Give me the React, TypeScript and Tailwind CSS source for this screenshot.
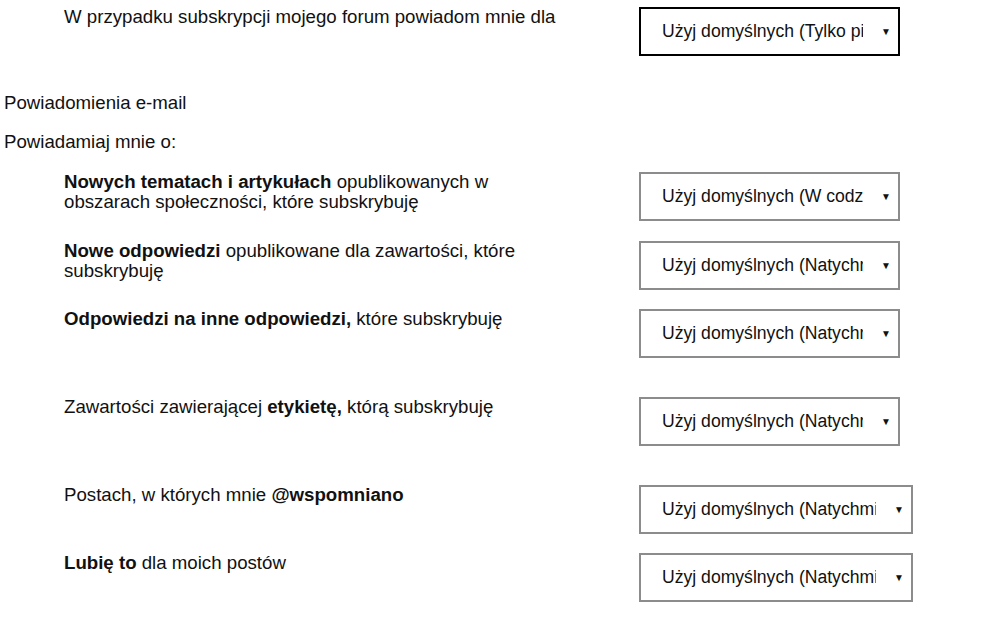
import type { ReactNode } from 'react';

function Dropdown({ value, wide, active }: { value: string; wide?: boolean; active?: boolean }) {
  return (
    <div
      className={`flex h-[49px] shrink-0 items-center border-2 bg-white pl-[21px] pr-[8px] ${
        wide ? 'w-[274px]' : 'w-[261px]'
      } ${active ? 'border-black' : 'border-[#8c8c8c]'}`}
    >
      <span className="mr-[19px] flex-1 overflow-hidden whitespace-nowrap text-[17.6px] text-[#111]">{value}</span>
      <span className="flex w-[8px] justify-center text-[10px] leading-none text-[#111]">▼</span>
    </div>
  );
}

function Row({ children, value, wide, active, className }: { children: ReactNode; value: string; wide?: boolean; active?: boolean; className?: string }) {
  return (
    <div className={`flex items-start ${className ?? ''}`}>
      <div className="w-[639px] shrink-0 pl-[64px] pr-[70px] text-[18.67px] leading-[20px] text-[#111]">{children}</div>
      <Dropdown value={value} wide={wide} active={active} />
    </div>
  );
}

export default function App() {
  return (
    <div className="min-h-screen w-full bg-white font-['Liberation_Sans',Arial,sans-serif]">
      <Row className="pt-[7px]" value="Użyj domyślnych (Tylko pierwszy post)" active>
        W przypadku subskrypcji mojego forum powiadom mnie dla
      </Row>

      <div className="mt-[37px] pl-[4px] text-[18.67px] leading-[20px] text-[#111]">Powiadomienia e-mail</div>
      <div className="mt-[19px] pl-[4px] text-[18.67px] leading-[20px] text-[#111]">Powiadamiaj mnie o:</div>

      <Row className="mt-[20px]" value="Użyj domyślnych (W codziennym podsumowaniu)">
        <b>Nowych tematach i artykułach</b> opublikowanych w obszarach społeczności, które subskrybuję
      </Row>
      <Row className="mt-[20px]" value="Użyj domyślnych (Natychmiast)">
        <b>Nowe odpowiedzi</b> opublikowane dla zawartości, które subskrybuję
      </Row>
      <Row className="mt-[19px]" value="Użyj domyślnych (Natychmiast)">
        <b>Odpowiedzi na inne odpowiedzi,</b> które subskrybuję
      </Row>
      <Row className="mt-[39px]" value="Użyj domyślnych (Natychmiast)">
        Zawartości zawierającej <b>etykietę,</b> którą subskrybuję
      </Row>
      <Row className="mt-[39px]" value="Użyj domyślnych (Natychmiast)" wide>
        Postach, w których mnie <b>@wspomniano</b>
      </Row>
      <Row className="mt-[19px]" value="Użyj domyślnych (Natychmiast)" wide>
        <b>Lubię to</b> dla moich postów
      </Row>
    </div>
  );
}
